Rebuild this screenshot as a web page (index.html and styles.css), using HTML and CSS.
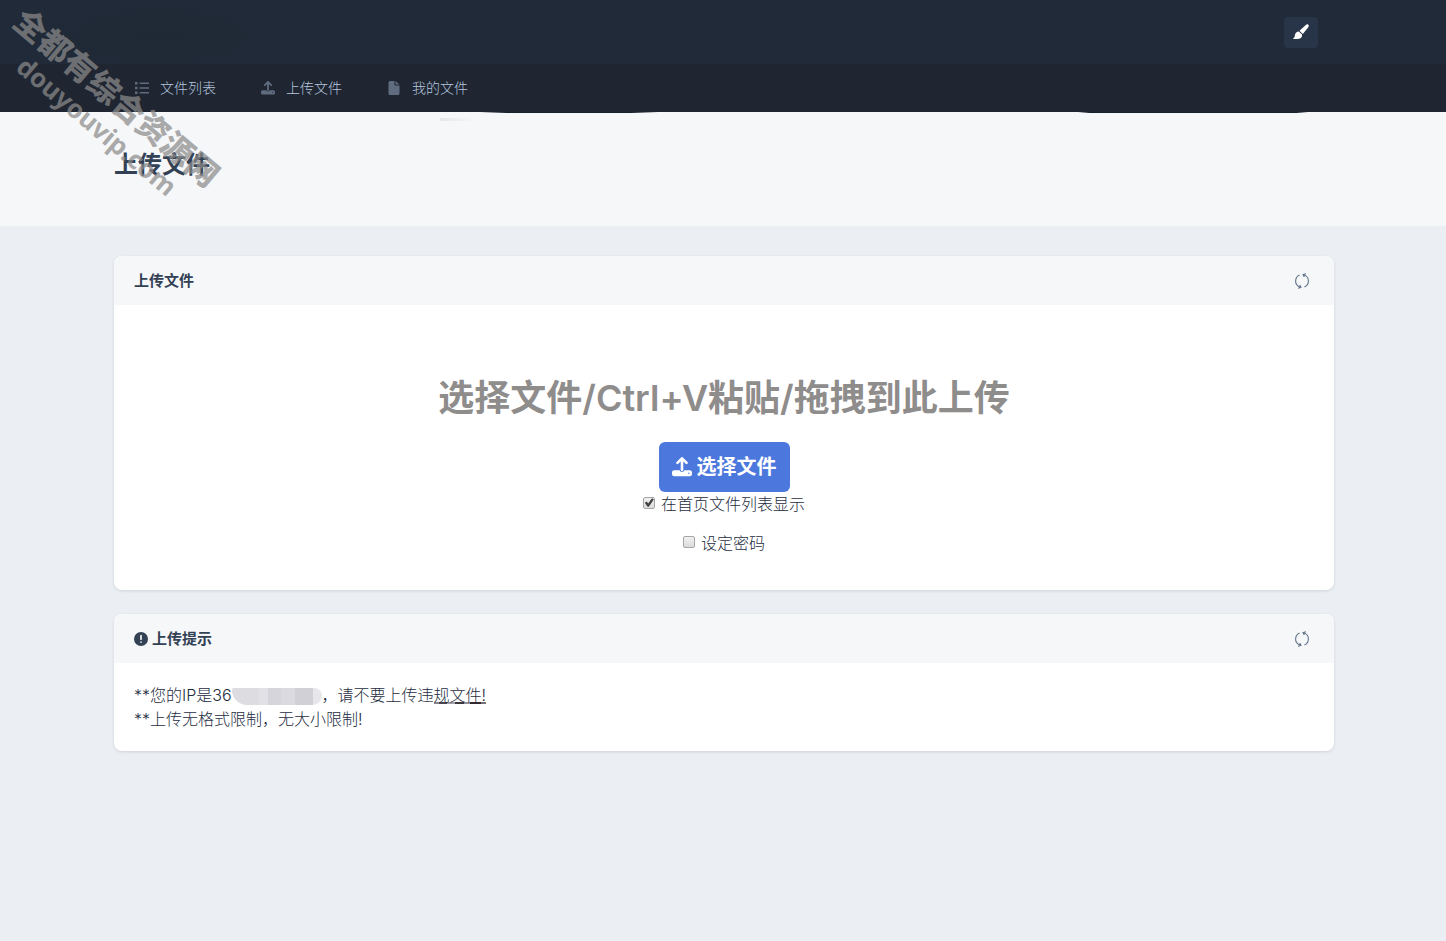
FILE: index.html
```html
<!DOCTYPE html>
<html lang="zh-CN">
<head>
<meta charset="utf-8">
<meta name="viewport" content="width=device-width, initial-scale=1">
<title>上传文件</title>
<link rel="stylesheet" href="styles.css">
</head>
<body>
<svg class="sprite" aria-hidden="true">
  <symbol id="upload" viewBox="0 0 14 14"><path d="M7 9V1.500M3.800 4.100 7 .9l3.200 3.200" fill="none" stroke="currentColor" stroke-width="1.800" stroke-linecap="round" stroke-linejoin="round"/><path fill="currentColor" fill-rule="evenodd" d="M1.500 9.300H5.300a1.800 1.800 0 0 0 3.400 0h3.800A1.500 1.500 0 0 1 14 10.800v1.200a1.500 1.500 0 0 1-1.500 1.500h-11A1.500 1.500 0 0 1 0 12v-1.200a1.500 1.500 0 0 1 1.500-1.500ZM11.800 10.900a.5.5 0 1 0 0 1 .5.5 0 0 0 0-1Z"/></symbol>
  <symbol id="refresh" viewBox="0 0 16 16"><g fill="none" stroke="currentColor" stroke-width="1.100"><path d="M5.600 1.900A6.600 6.600 0 0 0 4.800 13.600L6.600 14.300M4 15.300l3-.8-1.300-2.600M10.400 14.100A6.600 6.600 0 0 0 11.200 2.400L9.400 1.700M12 .7l-3 .8 1.300 2.600"/></g></symbol>
</svg>

<header class="topbar">
  <div class="container topbar-inner">
    <button class="theme-button" type="button" aria-label="主题">
      <svg class="icon-brush" viewBox="0 0 16 16" aria-hidden="true"><path fill="currentColor" d="M15.300.7c.8.8.5 1.800-.2 2.700L9.800 9.900 6.500 6.700 12.500 1.200c1-.9 2-1.200 2.800-.5ZM5.800 7.400l3.200 3.200c.4 2.600-1.200 4.400-4 4.400H.6c-.6 0-.6-.8-.1-1.100 1.300-.7 1.200-1.500 1.500-3.200.3-2 1.700-3.300 3.800-3.300Z"/></svg>
    </button>
  </div>
</header>

<nav class="navbar">
  <div class="container nav-inner">
    <a class="nav-link" href="#"><svg class="icon" viewBox="0 0 14 14" aria-hidden="true"><path fill="currentColor" d="M0 1h2.500v2.500H0zM0 5.800h2.500v2.500H0zM0 10.600h2.500v2.500H0zM4.500 1.500H14v1.600H4.500zM4.500 6.300H14v1.500H4.500zM4.500 11H14v1.600H4.500z"/></svg>文件列表</a>
    <a class="nav-link" href="#"><svg class="icon" aria-hidden="true"><use href="#upload"/></svg>上传文件</a>
    <a class="nav-link" href="#"><svg class="icon" viewBox="0 0 14 14" aria-hidden="true"><path fill="currentColor" d="M3 0h4.500v3.500c0 .6.400 1 1 1h4v8A1.500 1.500 0 0 1 11 14H3a1.500 1.500 0 0 1-1.500-1.500v-11A1.500 1.500 0 0 1 3 0Zm5.500 0 4 3.600h-4Z"/></svg>我的文件</a>
  </div>
</nav>

<section class="hero">
  <div class="container"><h1 class="page-title">上传文件</h1></div>
</section>

<main class="container content">
  <section class="card">
    <header class="card-header">
      <h2 class="card-title">上传文件</h2>
      <button class="refresh" type="button" aria-label="刷新"><svg class="icon-refresh" aria-hidden="true"><use href="#refresh"/></svg></button>
    </header>
    <div class="card-body upload">
      <p class="drop-title">选择文件/Ctrl+V粘贴/拖拽到此上传</p>
      <button class="upload-button" type="button"><svg class="icon-large" aria-hidden="true"><use href="#upload"/></svg>选择文件</button>
      <label class="check"><input class="checkbox" type="checkbox" checked>在首页文件列表显示</label>
      <label class="check check-password"><input class="checkbox" type="checkbox">设定密码</label>
    </div>
  </section>

  <section class="card">
    <header class="card-header">
      <h2 class="card-title"><svg class="icon" viewBox="0 0 14 14" aria-hidden="true"><circle cx="7" cy="7" r="7" fill="currentColor"/><path stroke="#f6f7f9" stroke-width="1.700" stroke-linecap="round" d="M7 3.500v3.700M7 10v.1"/></svg>上传提示</h2>
      <button class="refresh" type="button" aria-label="刷新"><svg class="icon-refresh" aria-hidden="true"><use href="#refresh"/></svg></button>
    </header>
    <div class="card-body tips">
      <p class="tip">**您的IP是36<span class="masked"></span>，请不要上传违<span class="smudged">规文件!</span></p>
      <p class="tip">**上传无格式限制，无大小限制!</p>
    </div>
  </section>
</main>

<div class="watermark">
  <div class="mark mark-name">全都有综合资源网</div>
  <div class="mark mark-site">douyouvip.com</div>
</div>
</body>
</html>
```
FILE: styles.css
```css
* { box-sizing: border-box; }
body {
  margin: 0;
  min-height: 100vh;
  background: #ebeef2;
  color: #334155;
  font-family: Inter, "Noto Sans CJK SC", sans-serif;
  font-size: 16px;
  line-height: 24px;
}
h1, h2, p { margin: 0; }
button { border: 0; font: inherit; cursor: pointer; }
svg { flex: none; }
.sprite { position: absolute; width: 0; height: 0; }
.container { max-width: 1222px; margin: 0 auto; padding-left: 2px; }
.icon { width: 14px; height: 14px; }

.topbar { background: radial-gradient(ellipse 130px 40px at 160px 36px, #1e2935, #212a38); }
.topbar-inner {
  height: 64px;
  display: flex;
  align-items: center;
  justify-content: flex-end;
  padding-right: 16px;
}
.theme-button {
  width: 34px;
  height: 31px;
  padding: 0;
  display: grid;
  place-items: center;
  border-radius: 4px;
  background: #283548;
  color: #fff;
}
.icon-brush { width: 16px; height: 16px; }

.navbar { background: #1f2531; }
.nav-inner { height: 48px; display: flex; align-items: center; gap: 45px; padding-left: 23px; }
.nav-link {
  display: flex;
  align-items: center;
  gap: 11px;
  color: #b4c6df;
  font-size: 14px;
  font-weight: 300;
  text-decoration: none;
}
.nav-link .icon { color: #5f6c7f; }

.hero {
  height: 114px;
  padding-top: 35px;
  background:
    linear-gradient(90deg, transparent, #17212d 15% 85%, transparent) 480px 0 / 178px 1px no-repeat,
    linear-gradient(90deg, transparent, #17212d 5% 95%, transparent) 1078px 0 / 230px 1px no-repeat,
    linear-gradient(90deg, #e5e6e8, transparent) 440px 6px / 34px 3px no-repeat,
    #f6f7f9;
}
.page-title { font-size: 24px; line-height: 36px; font-weight: 600; }

.content { padding-top: 30px; display: grid; gap: 24px; }
.card {
  overflow: hidden;
  border-radius: 8px;
  background: #fff;
  box-shadow: 0 1px 3px rgba(51, 65, 85, .14);
}
.card-header {
  min-height: 49px;
  padding: 0 24px 0 20px;
  display: flex;
  align-items: center;
  justify-content: space-between;
  background: #f6f7f9;
}
.card-title { display: flex; align-items: center; gap: 4px; font-size: 15px; line-height: 24px; font-weight: 600; }
.refresh { padding: 0; display: flex; background: none; color: #64748b; }
.icon-refresh { width: 16px; height: 16px; }

.upload { padding: 65px 20px 34px; display: flex; flex-direction: column; align-items: center; }
.drop-title { font-size: 36px; line-height: 56px; font-weight: 600; color: #8f8c8c; text-align: center; }
.upload-button {
  height: 50px;
  margin-top: 16px;
  padding: 0 13px;
  display: flex;
  align-items: center;
  gap: 5px;
  border-radius: 6px;
  background: #4c78dd;
  color: #fff;
  font-size: 20px;
  font-weight: 700;
}
.icon-large { width: 20px; height: 20px; }
.check { display: flex; align-items: center; gap: 6px; color: #1e2c40; font-weight: 300; }
.check-password { margin-top: 15px; margin-bottom: 1px; }
.checkbox {
  appearance: none;
  width: 12px;
  height: 12px;
  margin: 0 0 3px;
  border: 1px solid #a6a6a6;
  border-radius: 2px;
  background: linear-gradient(#f0f0f0, #dcdcdc);
  display: grid;
  place-items: center;
}
.checkbox:checked::after {
  content: "";
  width: 10px;
  height: 9px;
  background: #404040;
  clip-path: polygon(8% 52%, 28% 38%, 42% 60%, 80% 4%, 98% 16%, 48% 98%, 36% 98%);
}

.tips { padding: 20px; }
.tip { color: #1e2c40; font-weight: 300; }
.masked {
  display: inline-block;
  width: 90px;
  height: 17px;
  vertical-align: -4px;
  border-radius: 2px 8px 10px 16px;
  background: linear-gradient(90deg, #dcdce1 0 30%, #e1e1e6 30% 40%, #d5d5db 40% 55%, #dadae0 55% 70%, #d0d0d6 70% 90%, #e7e7eb 90%);
}
.smudged { background: linear-gradient(90deg, #8a878f 0 10%, #4b4550 10% 25%, #a5a2a8 25% 40%, #3c3641 40% 58%, #918e96 58% 70%, #33292f 70% 90%, #77717a 90%) 0 17px / 100% 2px no-repeat; }

.watermark { position: absolute; top: 0; left: 0; width: 260px; height: 226px; overflow: hidden; pointer-events: none; }
.mark { position: absolute; transform-origin: 0 50%; transform: rotate(40deg); white-space: nowrap; color: rgba(139, 139, 139, .72); font-weight: 900; }
.mark-name { left: 18px; top: -4px; font-size: 32px; line-height: 40px; }
.mark-site { left: 21px; top: 46px; font-family: "Noto Sans", sans-serif; font-size: 26px; line-height: 32px; font-weight: 700; }
```
